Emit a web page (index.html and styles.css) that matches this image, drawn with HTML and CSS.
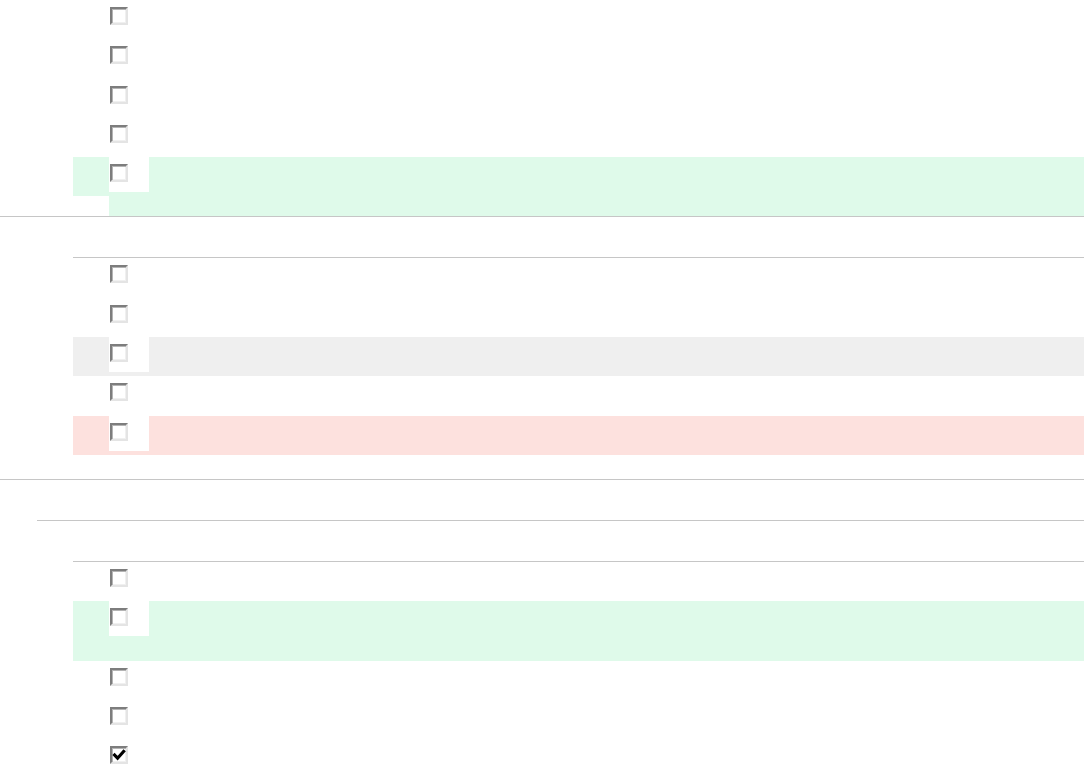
FILE: index.html
```html
<!DOCTYPE html>
<html>
<head>
<meta charset="utf-8">
<link rel="stylesheet" href="styles.css">
</head>
<body>
<div class="tree">
  <ul class="list indent2">
    <li class="item"><div class="row"><div class="cell"><span class="cb"></span></div></div></li>
    <li class="item"><div class="row"><div class="cell"><span class="cb"></span></div></div></li>
    <li class="item"><div class="row"><div class="cell"><span class="cb"></span></div></div></li>
    <li class="item"><div class="row"><div class="cell"><span class="cb"></span></div></div></li>
    <li class="item"><div class="row green"><div class="cell"><span class="cb"></span></div></div><div class="tail green"></div></li>
  </ul>

  <div class="group">
    <div class="group-head"></div>
    <ul class="list bordered indent2 pad-bottom">
      <li class="item"><div class="row"><div class="cell"><span class="cb"></span></div></div></li>
      <li class="item"><div class="row"><div class="cell"><span class="cb"></span></div></div></li>
      <li class="item"><div class="row gray"><div class="cell"><span class="cb"></span></div></div></li>
      <li class="item"><div class="row"><div class="cell"><span class="cb"></span></div></div></li>
      <li class="item"><div class="row pink"><div class="cell"><span class="cb"></span></div></div></li>
    </ul>
  </div>

  <div class="group">
    <div class="group-head"></div>
    <div class="group indent1">
      <div class="group-head"></div>
      <ul class="list bordered indent1">
        <li class="item"><div class="row"><div class="cell"><span class="cb"></span></div></div></li>
        <li class="item"><div class="row tall green"><div class="cell"><span class="cb"></span></div></div></li>
        <li class="item"><div class="row"><div class="cell"><span class="cb"></span></div></div></li>
        <li class="item"><div class="row"><div class="cell"><span class="cb"></span></div></div></li>
        <li class="item"><div class="row"><div class="cell"><span class="cb checked"><svg viewBox="0 0 14 14" width="14" height="14"><path d="M2.6 7 L5.6 10.2 L11.6 3.4" fill="none" stroke="#000" stroke-width="3.2" stroke-linecap="square" stroke-linejoin="miter"/></svg></span></div></div></li>
      </ul>
    </div>
  </div>
</div>
</body>
</html>
```
FILE: styles.css
```css
html, body {
  margin: 0;
  padding: 0;
  background: #ffffff;
  font-family: "Liberation Sans", Arial, sans-serif;
}

.tree {
  width: 1084px;
}

.list {
  list-style: none;
  margin: 0;
  padding: 0;
}

.indent2 {
  margin-left: 73px;
}

.indent1 {
  margin-left: 37px;
}

.list.indent1 {
  margin-left: 36px;
}

.bordered {
  border-top: 1px solid #c6c6c6;
}

.pad-bottom {
  padding-bottom: 24px;
}

.group {
  border-top: 1px solid #c6c6c6;
}

.group-head {
  height: 40px;
}

.item {
  margin: 0;
  padding: 0;
}

.row {
  height: 39.3px;
  padding-left: 36px;
  box-sizing: border-box;
}

.row.tall {
  height: 59.3px;
}

.tail {
  margin-left: 36px;
  height: 20px;
}

.green {
  background: #dffaea;
}

.gray {
  background: #efefef;
}

.pink {
  background: #fde1de;
}

.cell {
  width: 40px;
  height: 35px;
  box-sizing: border-box;
  padding: 7px 0 0 1px;
  background: #ffffff;
}

.cb {
  display: block;
  width: 18px;
  height: 18px;
  box-sizing: border-box;
  border: 2px solid;
  border-color: #7d7d7d #e4e4e4 #e4e4e4 #7d7d7d;
  box-shadow: inset 1px 1px 0 #b4b4b4, inset -1px -1px 0 #f0f0f0;
  background: #ffffff;
}

.cb svg {
  display: block;
}
```
